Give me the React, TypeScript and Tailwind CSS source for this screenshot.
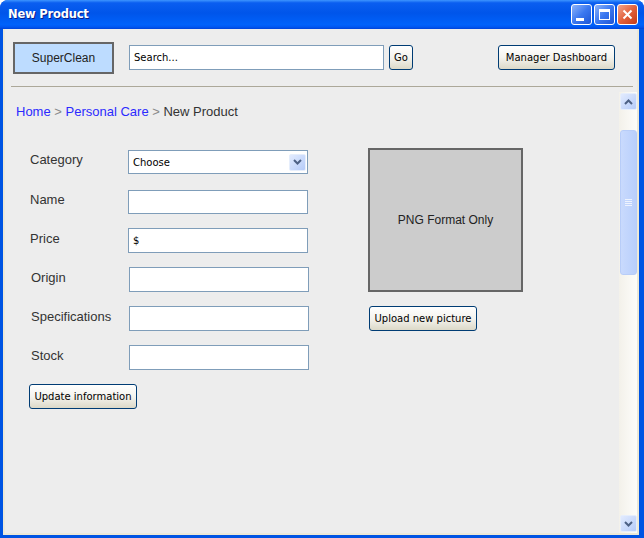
import React from 'react'

const xpBtn =
  "h-[25px] rounded-[3px] border border-[#003c74] bg-gradient-to-b from-white via-[#f4f3ee] to-[#dcd9c8] text-[10px] text-black font-['DejaVu_Sans',sans-serif] flex items-center justify-center"

const inputCls = "w-[180px] border border-[#7f9db9] bg-white text-[10px] font-['DejaVu_Sans',sans-serif]"

function TitleButton({ kind }: { kind: 'min' | 'max' | 'close' }) {
  const bg =
    kind === 'close'
      ? 'bg-gradient-to-br from-[#f0a48c] via-[#e2613c] to-[#c43a14]'
      : 'bg-gradient-to-br from-[#8db2f8] via-[#3b78f0] to-[#1d55d6]'
  return (
    <div className={`w-[21px] h-[21px] rounded-[3px] border border-white ${bg} flex items-center justify-center`}>
      {kind === 'min' && <div className="w-[8px] h-[3px] bg-white mt-[9px] -ml-[3px]" />}
      {kind === 'max' && <div className="w-[11px] h-[11px] border border-white border-t-[3px]" />}
      {kind === 'close' && (
        <svg width="11" height="11" viewBox="0 0 11 11">
          <path d="M1.5 1.5 L9.5 9.5 M9.5 1.5 L1.5 9.5" stroke="white" strokeWidth="2" />
        </svg>
      )}
    </div>
  )
}

function ScrollButton({ dir }: { dir: 'up' | 'down' }) {
  return (
    <div className="w-[17px] h-[17px] rounded-[2px] border border-[#e6eefc] bg-gradient-to-br from-[#e2ebfe] to-[#b5cbf9] flex items-center justify-center">
      <svg width="9" height="6" viewBox="0 0 9 6">
        <path
          d={dir === 'up' ? 'M1 5 L4.5 1.5 L8 5' : 'M1 1 L4.5 4.5 L8 1'}
          stroke="#4d6185"
          strokeWidth="2"
          fill="none"
        />
      </svg>
    </div>
  )
}

const fields = [
  { label: 'Category', select: true, h: 'h-[24px]', mt: '' },
  { label: 'Name', h: 'h-[24px]', mt: 'mt-[16px]' },
  { label: 'Price', value: '$', h: 'h-[25px]', mt: 'mt-[14px]' },
  { label: 'Origin', shift: true, h: 'h-[25px]', mt: 'mt-[14px]' },
  { label: 'Specifications', shift: true, h: 'h-[25px]', mt: 'mt-[14px]' },
  { label: 'Stock', shift: true, h: 'h-[25px]', mt: 'mt-[14px]' },
]

export default function App() {
  return (
    <div className="w-[644px] h-[538px] bg-[#0054e3] rounded-t-[8px] flex flex-col overflow-hidden font-['Liberation_Sans',Arial,sans-serif]">
      {/* title bar */}
      <div className="h-[29px] shrink-0 flex items-center pl-[8px] pr-[6px] bg-[linear-gradient(to_bottom,#3d95ff_0%,#0a5ef0_10%,#0055ea_45%,#0062fb_85%,#0057f2_93%,#0043d8_100%)]">
        <span className="text-white font-bold text-[11.5px] font-['DejaVu_Sans',sans-serif] tracking-[-0.2px] [text-shadow:1px_1px_0_#0a1e8a]">
          New Product
        </span>
        <div className="ml-auto flex gap-[2px]">
          <TitleButton kind="min" />
          <TitleButton kind="max" />
          <TitleButton kind="close" />
        </div>
      </div>

      {/* body */}
      <div className="flex-1 ml-[3px] mr-[5px] mb-[3px] border-x-[2px] border-b-[2px] border-[#ece9d8] bg-[#ededed] flex flex-col min-h-0">
        <div className="h-[57px] shrink-0 flex items-center">
          <div className="ml-[8px] w-[101px] h-[32px] border-2 border-[#666666] bg-[#bddcff] flex items-center justify-center text-[12px] text-[#222]">
            SuperClean
          </div>
          <div className={`${inputCls} ml-[15px] !w-[255px] h-[25px] flex items-center pl-[4px] text-black`}>
            Search...
          </div>
          <button className={`${xpBtn} ml-[5px] w-[24px]`}>Go</button>
          <button className={`${xpBtn} ml-[85px] w-[117px]`}>Manager Dashboard</button>
        </div>
        <div className="ml-[6px] mr-[4px] h-px shrink-0 bg-[#aca899]" />

        <div className="flex-1 flex min-h-0 pt-[5px]">
          <div className="flex-1 pl-[11px] pt-[12px]">
            <div className="text-[13px] leading-[16px] text-[#333]">
              <span className="text-[#2b2bff]">Home</span>
              <span className="text-[#888]"> &gt; </span>
              <span className="text-[#2b2bff]">Personal Care</span>
              <span className="text-[#888]"> &gt; </span>
              <span>New Product</span>
            </div>

            <div className="flex mt-[30px]">
              <div className="flex flex-col pl-[14px] w-[352px]">
                {fields.map((f) => (
                  <div key={f.label} className={`flex items-center ${f.h} ${f.mt} ${f.shift ? 'pl-[1px]' : ''}`}>
                    <div className="w-[98px] text-[13px] text-[#333] -mt-[4px]">{f.label}</div>
                    {f.select ? (
                      <div className={`${inputCls} h-full flex items-center pl-[4px] pr-[1px]`}>
                        <span className="flex-1">Choose</span>
                        <ScrollButton dir="down" />
                      </div>
                    ) : (
                      <div className={`${inputCls} h-full flex items-center pl-[4px]`}>{f.value}</div>
                    )}
                  </div>
                ))}
                <button className={`${xpBtn} mt-[14px] -ml-[1px] w-[108px]`}>Update information</button>
              </div>

              <div className="flex flex-col -mt-[2px]">
                <div className="w-[155px] h-[144px] border-2 border-[#666666] bg-[#cccccc] flex items-center justify-center text-[12px] text-[#222]">
                  PNG Format Only
                </div>
                <button className={`${xpBtn} mt-[14px] ml-[1px] w-[108px]`}>Upload new picture</button>
              </div>
            </div>
          </div>

          {/* scrollbar */}
          <div className="w-[18px] shrink-0 bg-gradient-to-r from-[#f3f1ea] to-[#fdfdfa] flex flex-col items-center py-[1px]">
            <ScrollButton dir="up" />
            <div className="mt-[20px] w-[17px] h-[145px] rounded-[3px] border border-[#b8cdf8] bg-gradient-to-r from-[#c9dafd] to-[#b9cffc] flex items-center justify-center">
              <div className="flex flex-col gap-[1px]">
                <div className="w-[7px] h-px bg-[#eef3fe]" />
                <div className="w-[7px] h-px bg-[#eef3fe]" />
                <div className="w-[7px] h-px bg-[#eef3fe]" />
                <div className="w-[7px] h-px bg-[#eef3fe]" />
              </div>
            </div>
            <div className="flex-1" />
            <ScrollButton dir="down" />
          </div>
        </div>
      </div>
    </div>
  )
}
